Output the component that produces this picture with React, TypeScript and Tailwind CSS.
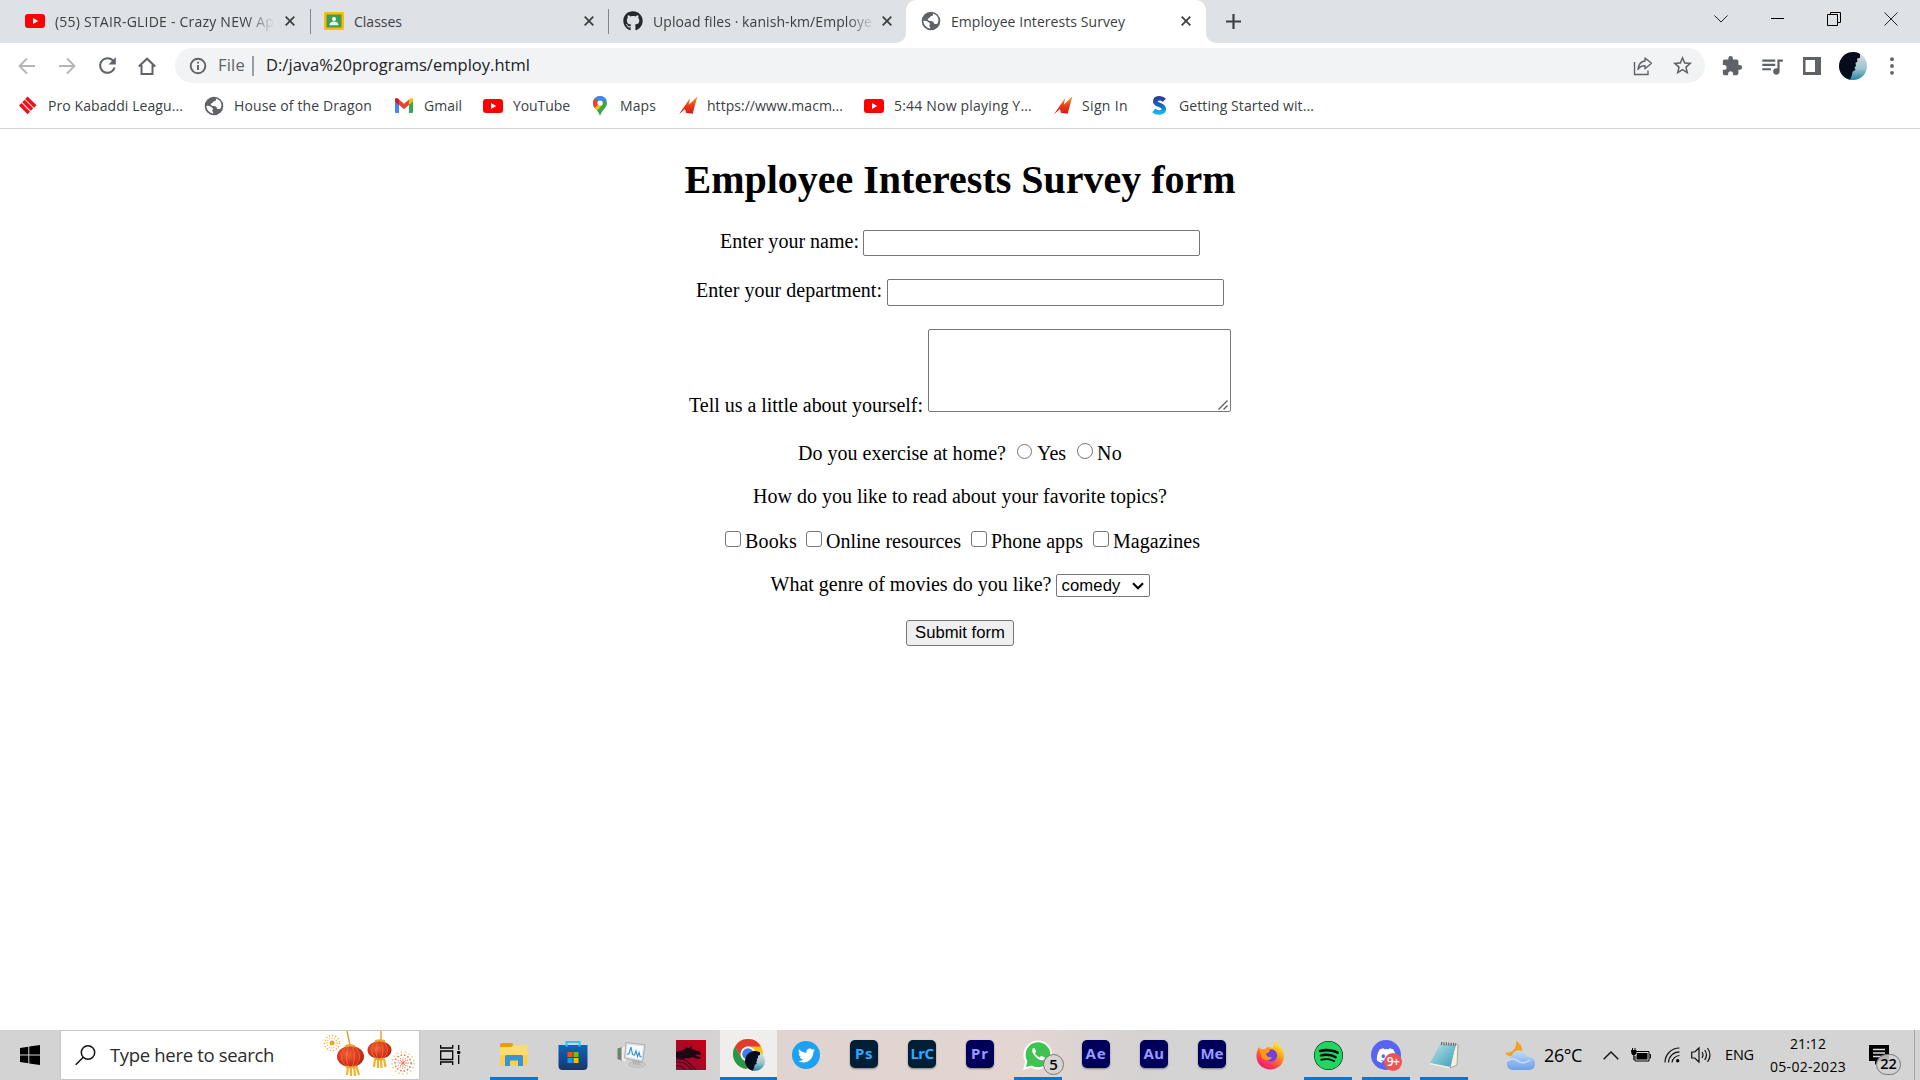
import { useLayoutEffect, useRef, useState } from "react";
import type { ReactNode } from "react";
import { FaGithub, FaTwitter, FaSpotify, FaDiscord } from "react-icons/fa";
import { MdExtension, MdQueueMusic, MdRefresh, MdStarBorder } from "react-icons/md";

/* Single-line label whose tracking is adjusted so that it fills a given width. */
function Fit({ w, className = "", children }: { w: number; className?: string; children: string }) {
  const ref = useRef<HTMLSpanElement>(null);
  const [spacing, setSpacing] = useState(0);
  useLayoutEffect(() => {
    if (ref.current) {
      const natural = ref.current.getBoundingClientRect().width;
      setSpacing((w - natural) / children.length);
    }
  }, []);
  return (
    <span ref={ref} className={"inline-block shrink-0 whitespace-nowrap " + className} style={{ letterSpacing: spacing + "px" }}>
      {children}
    </span>
  );
}

/* ---------- browser icons ---------- */

function YouTube() {
  return (
    <svg width="20" height="14" viewBox="0 0 20 14" className="block shrink-0">
      <rect width="20" height="14" rx="3" fill="#f00" />
      <path d="M8 4l5.2 3L8 10z" fill="#fff" />
    </svg>
  );
}

function Classroom() {
  return (
    <svg width="20" height="18" viewBox="0 0 20 18" className="block shrink-0">
      <rect width="20" height="18" rx="1.5" fill="#fbbc04" />
      <rect x="2.5" y="2.5" width="15" height="13" fill="#3f9d58" />
      <circle cx="10" cy="7" r="2" fill="#fff" />
      <path d="M5.500 13.200c0-2.800 2.400-3.800 4.500-3.800s4.500 1 4.500 3.800z" fill="#e8f5e9" />
    </svg>
  );
}

function Globe({ size }: { size: number }) {
  return (
    <svg width={size} height={size} viewBox="0 0 20 20" className="block shrink-0">
      <circle cx="10" cy="10" r="9.300" fill="#5f6368" />
      <path d="M11.500 2.400c1 1.200.6 2.300-.8 2.700-1.500.3-1.400 1.300-2.600 1.900-1.300.6-1.800 1.300-1 2.200 1.300 1.100 3.600.4 4.900 1.400 1.300 1.200.300 2.200 1.800 2.400 1.800.2 2.700-.4 3.200-1.500.900-2.300.500-5.200-1.700-7.200-1.100-1-2.500-1.700-3.800-1.900z" fill="#fff" />
      <path d="M2.400 9.800c1.800 0 3.900.500 5.200 1.400 1.200.9 1.900 1.500 1.100 2.500-.9.900-.4 1.600.3 2.400.5.600.3 1.300-.5 1.300-3.500-.8-6-3.800-6.100-7.600z" fill="#fff" />
    </svg>
  );
}

function CloseX() {
  return (
    <svg width="10" height="10" viewBox="0 0 10 10" className="block shrink-0">
      <path d="M0.700 0.700L9.300 9.300M9.300 0.700L0.700 9.300" stroke="#3c4043" strokeWidth="1.800" />
    </svg>
  );
}

function Kabaddi() {
  return (
    <svg width="18" height="19" viewBox="0 0 18 19" className="block shrink-0" stroke="#ee1119" strokeWidth="3.600">
      <path d="M7.300 1.800l9 8.700M4.500 5l8.500 8.500M1.300 8.200l8.500 8.800" />
    </svg>
  );
}

function Gmail() {
  return (
    <svg width="18" height="15" viewBox="0 0 20 15" preserveAspectRatio="none" className="block shrink-0">
      <path d="M0 2.500V13.700Q0 15 1.400 15H4.500V6z" fill="#4285f4" />
      <path d="M20 2.500V13.700Q20 15 18.600 15H15.500V6z" fill="#34a853" />
      <path d="M15.500 1.500V7L20 3.600V2C20 0 18 -0.500 16.500 .7z" fill="#fbbc04" />
      <path d="M4.500 7V1.500L10 5.700l5.500-4.200V7L10 11.200z" fill="#ea4335" />
      <path d="M0 2V3.600L4.500 7V1.500L3.500.7C2-.5 0 0 0 2z" fill="#c5221f" />
    </svg>
  );
}

function MapsPin() {
  return (
    <svg width="14" height="20" viewBox="0 0 14 20" className="block shrink-0">
      <path d="M7 0a7 7 0 0 1 7 7c0 5-5 6.500-7 13C5 13.500 0 12 0 7a7 7 0 0 1 7-7z" fill="#34a853" />
      <path d="M7 0a7 7 0 0 1 6.600 4.600L7 7 1.600 2.500A7 7 0 0 1 7 0z" fill="#4285f4" />
      <path d="M1.600 2.500L7 7 1.900 12C.8 10.700 0 9.200 0 7c0-1.700.6-3.300 1.600-4.500z" fill="#ea4335" />
      <path d="M1.900 12L9 4.500 10 8l-5.600 6.500z" fill="#fbbc04" />
      <circle cx="7" cy="7" r="2.600" fill="#fff" />
    </svg>
  );
}

function MacmillanM() {
  return (
    <svg width="19" height="19" viewBox="0 0 19 19" className="block shrink-0">
      <defs>
        <linearGradient id="flame" x1="0" y1="1" x2="0" y2="0">
          <stop offset="0" stopColor="#d01616" />
          <stop offset="0.5" stopColor="#ea3f1a" />
          <stop offset="1" stopColor="#f7a81c" />
        </linearGradient>
      </defs>
      <path d="M0.300 18L11 2.500 9.800 8.800 18.300 0.500 13.600 18l-3-1.500 2-5.500-5.500 6.500-1-4.500z" fill="url(#flame)" />
      <path d="M0.300 18L11 2.500 7 14.500 5.500 12zM7.500 17L18.300 0.500 12 17.500z" fill="url(#flame)" />
    </svg>
  );
}

function SLogo() {
  return (
    <svg width="15" height="19" viewBox="0 0 15 19" className="block shrink-0">
      <defs>
        <linearGradient id="sg" x1="0" y1="0" x2="0" y2="1">
          <stop offset="0" stopColor="#2b3f9e" />
          <stop offset="0.500" stopColor="#1464c0" />
          <stop offset="1" stopColor="#10b6ee" />
        </linearGradient>
      </defs>
      <path d="M12.300 4.400C9.500 1.400 3.300 1.600 3.300 5.400c0 4 8.500 3 8.500 7.700 0 4-7 4.400-10 1.400" fill="none" stroke="url(#sg)" strokeWidth="4.600" />
    </svg>
  );
}

function Avatar({ size }: { size: number }) {
  return (
    <svg width={size} height={size} viewBox="0 0 28 28" className="block shrink-0">
      <defs>
        <linearGradient id="sea" x1="0" y1="0" x2="0" y2="1">
          <stop offset="0.200" stopColor="#c9d8da" />
          <stop offset="0.600" stopColor="#9cc4cd" />
          <stop offset="1" stopColor="#1f86a3" />
        </linearGradient>
      </defs>
      <circle cx="14" cy="14" r="14" fill="url(#sea)" />
      <path d="M21 1.900A14 14 0 1 0 11 27.700l2-5 .5-3 3-2-1-2 1.500-2-.5-3 2-1-.5-3 3-1z" fill="#050d1c" />
    </svg>
  );
}

/* ---------- browser chrome ---------- */

function TabStrip() {
  return (
    <div className="flex h-[43px] w-full items-start bg-[#dee1e6]">
      <div className="flex h-[43px] w-[310px] items-center pb-[1px] pl-[25px]">
        <YouTube />
        <div className="ml-[10px] w-[220px] [mask-image:linear-gradient(to_right,black_190px,transparent_220px)]">
          <Fit w={219}>(55) STAIR-GLIDE - Crazy NEW Ap</Fit>
        </div>
        <div className="ml-[10px]"><CloseX /></div>
      </div>
      <div className="mt-[9px] h-[25px] w-px bg-[#80868b]" />
      <div className="flex h-[43px] w-[297px] items-center pb-[1px] pl-[13px]">
        <Classroom />
        <div className="ml-[10px] w-[219px]"><Fit w={48}>Classes</Fit></div>
        <div className="ml-[11px]"><CloseX /></div>
      </div>
      <div className="mt-[9px] h-[25px] w-px bg-[#80868b]" />
      <div className="flex h-[43px] w-[287px] items-center pb-[1px] pl-[14px]">
        <FaGithub size={20} color="#24292f" className="shrink-0" />
        <div className="ml-[10px] w-[220px] [mask-image:linear-gradient(to_right,black_194px,transparent_222px)]">
          <Fit w={219}>Upload files · kanish-km/Employe</Fit>
        </div>
        <div className="ml-[9px]"><CloseX /></div>
      </div>
      <div className="h-[43px] w-[10px] bg-white">
        <div className="h-[43px] w-[10px] rounded-br-[10px] bg-[#dee1e6]" />
      </div>
      <div className="flex h-[43px] w-[300px] items-start bg-[#dee1e6]">
        <div className="flex h-[43px] w-[300px] items-center rounded-t-[10px] bg-white pb-[1px] pl-[15px]">
          <Globe size={20} />
          <div className="ml-[10px] w-[220px]"><Fit w={174}>Employee Interests Survey</Fit></div>
          <div className="ml-[10px]"><CloseX /></div>
        </div>
      </div>
      <div className="h-[43px] w-[10px] bg-white">
        <div className="h-[43px] w-[10px] rounded-bl-[10px] bg-[#dee1e6]" />
      </div>
      <svg width="15" height="15" viewBox="0 0 15 15" className="ml-[10px] mt-[14px] block">
        <path d="M7.500 0v15M0 7.500h15" stroke="#3c4043" strokeWidth="2.200" />
      </svg>
      <div className="ml-auto mr-[22px] mt-[12px] flex items-center gap-[43px]">
        <svg width="14" height="14" viewBox="0 0 14 14" fill="none" stroke="#202124"><path d="M.5 3.500l6.500 6.500 6.500-6.500" /></svg>
        <svg width="13" height="14" viewBox="0 0 13 14"><rect y="6" width="13" height="1" fill="#000" /></svg>
        <svg width="14" height="14" viewBox="0 0 14 14" fill="none" stroke="#000"><path d="M.5 2.500h10v11h-10zM3.500 2.500v-2h10v10h-3" /></svg>
        <svg width="14" height="14" viewBox="0 0 14 14" fill="none" stroke="#202124"><path d="M.5.500l13 13M13.500.500l-13 13" /></svg>
      </div>
    </div>
  );
}

function Toolbar() {
  return (
    <div className="flex h-[45px] items-center text-[16.500px]">
      <svg width="18" height="18" viewBox="0 0 18 18" className="ml-[18px]" fill="none" stroke="#b3b5b8" strokeWidth="1.900"><path d="M17 9H2M9 1.500L1.500 9 9 16.500" /></svg>
      <svg width="18" height="18" viewBox="0 0 18 18" className="ml-[22px]" fill="none" stroke="#b3b5b8" strokeWidth="1.900"><path d="M1 9h15M9 1.500L16.500 9 9 16.500" /></svg>
      <MdRefresh size={25} color="#5f6368" className="ml-[19px]" />
      <svg width="18" height="18" viewBox="0 0 18 18" className="ml-[18px]" fill="none" stroke="#5f6368" strokeWidth="2"><path d="M3.500 8v9h11V8M.8 9.500L9 1.700l8.200 7.800" /></svg>
      <div className="ml-[19px] flex h-[35px] w-[1530px] items-center rounded-full bg-[#f1f3f4] pl-[14px]">
        <svg width="18" height="18" viewBox="0 0 18 18" fill="none" stroke="#5f6368" strokeWidth="1.900"><circle cx="9" cy="9" r="7.300" /><path d="M9 8v5M9 4.800v1.800" /></svg>
        <Fit w={27} className="ml-[11px] text-[#5f6368]">File</Fit>
        <div className="ml-[7px] h-5 w-[2px] bg-[#9aa0a6]" />
        <Fit w={264} className="ml-[12px] text-[#202124]">D:/java%20programs/employ.html</Fit>
        <svg width="20" height="20" viewBox="0 0 20 20" className="ml-auto" fill="none" stroke="#5f6368" strokeWidth="1.400">
          <path d="M1.500 6v12.500h13.500V14.500" />
          <path d="M12 2l6.500 5.300L12 12.700V9.700c-3.500 0-5.500 1-7 3.800C5.500 8.500 8 5.400 12 5z" strokeLinejoin="round" />
        </svg>
        <MdStarBorder size={23} color="#5f6368" className="ml-[18px] mr-[11px]" />
      </div>
      <MdExtension size={22} color="#5f6368" className="ml-[16px]" />
      <MdQueueMusic size={26} color="#5f6368" className="ml-[16px]" />
      <svg width="18" height="18" viewBox="0 0 18 18" className="ml-[18px]"><path fillRule="evenodd" fill="#5f6368" d="M0 0h18v18H0zM2.500 3v12H12V3z" /></svg>
      <div className="ml-[18px]"><Avatar size={28} /></div>
      <svg width="4" height="18" viewBox="0 0 4 18" className="ml-[23px]" fill="#5f6368"><circle cx="2" cy="2.200" r="1.900" /><circle cx="2" cy="9" r="1.900" /><circle cx="2" cy="15.800" r="1.900" /></svg>
    </div>
  );
}

function Bookmark({ slot, gap, w, icon, children }: { slot: string; gap: string; w: number; icon: ReactNode; children: string }) {
  return (
    <div className={"flex shrink-0 items-center " + slot}>
      {icon}
      <div className={gap}><Fit w={w}>{children}</Fit></div>
    </div>
  );
}

function Bookmarks() {
  return (
    <div className="flex h-[41px] items-center border-b border-[#d4d6d9] pb-[5px] pl-[19px]">
      <Bookmark slot="w-[185px]" gap="ml-[11px]" w={135} icon={<Kabaddi />}>Pro Kabaddi Leagu...</Bookmark>
      <Bookmark slot="w-[191px]" gap="ml-[10px]" w={138} icon={<Globe size={20} />}>House of the Dragon</Bookmark>
      <Bookmark slot="w-[88px]" gap="ml-[11px]" w={38} icon={<Gmail />}>Gmail</Bookmark>
      <Bookmark slot="w-[110px]" gap="ml-[10px]" w={57} icon={<YouTube />}>YouTube</Bookmark>
      <Bookmark slot="w-[86px]" gap="ml-[13px]" w={36} icon={<MapsPin />}>Maps</Bookmark>
      <Bookmark slot="w-[185px]" gap="ml-[9px]" w={136} icon={<MacmillanM />}>https://www.macm...</Bookmark>
      <Bookmark slot="w-[190px]" gap="ml-[10px]" w={138} icon={<YouTube />}>5:44 Now playing Y...</Bookmark>
      <Bookmark slot="w-[98px]" gap="ml-[9px]" w={46} icon={<MacmillanM />}>Sign In</Bookmark>
      <Bookmark slot="w-[170px]" gap="ml-[12px]" w={135} icon={<SLogo />}>Getting Started wit...</Bookmark>
    </div>
  );
}

/* ---------- survey form ---------- */

const box = "block shrink-0 appearance-none border border-[#767676] bg-white ";

function Check({ label, gap, w }: { label: string; gap: string; w: number }) {
  return (
    <label className={"flex " + gap}>
      <input type="checkbox" className={box + "mt-[1px] size-4 rounded-[3px]"} />
      <Fit w={w} className="ml-1">{label}</Fit>
    </label>
  );
}

function Survey() {
  return (
    <main className="flex h-[901px] flex-col items-center bg-white pt-[28px] font-['Liberation_Serif',serif] text-[20px] leading-[23px] text-black">
      <h1 className="h-[72px] text-[40px] font-bold leading-[46px]"><Fit w={551}>Employee Interests Survey form</Fit></h1>
      <div className="flex h-[49px]">
        <Fit w={139} className="mt-[1px]">Enter your name:</Fit>
        <input className={box + "ml-[4px] mt-[1px] h-[26px] w-[337px] rounded-[2px]"} />
      </div>
      <div className="flex h-[51px]">
        <Fit w={186} className="mt-[1px]">Enter your department:</Fit>
        <input className={box + "ml-[5px] mt-[1px] h-[27px] w-[337px] rounded-[2px]"} />
      </div>
      <div className="flex h-[113px]">
        <Fit w={234} className="mt-[65px]">Tell us a little about yourself:</Fit>
        <div className="relative ml-[5px] h-[83px] w-[303px]">
          <textarea className={box + "h-[83px] w-[303px] resize-none rounded-[2px]"} />
          <svg width="10" height="10" viewBox="0 0 10 10" className="absolute bottom-[2px] right-[3px]" fill="none" stroke="#5a5a5a" strokeWidth="1.300"><path d="M.5 9.500l9-9M5.500 9.500l4-4" /></svg>
        </div>
      </div>
      <div className="flex h-[43px]">
        <Fit w={208}>Do you exercise at home?</Fit>
        <label className="flex"><input type="radio" name="exercise" className={box + "ml-[11px] mt-[2px] size-[15px] rounded-full"} /><Fit w={29} className="ml-[5px]">Yes</Fit></label>
        <label className="flex"><input type="radio" name="exercise" className={box + "ml-[11px] mt-[1px] size-4 rounded-full"} /><Fit w={25} className="ml-1">No</Fit></label>
      </div>
      <div className="h-[45px]"><Fit w={414}>How do you like to read about your favorite topics?</Fit></div>
      <div className="flex h-[43px] pl-[5px]">
        <Check label="Books" gap="" w={52} />
        <Check label="Online resources" gap="ml-[9px]" w={135} />
        <Check label="Phone apps" gap="ml-[10px]" w={92} />
        <Check label="Magazines" gap="ml-[10px]" w={87} />
      </div>
      <div className="flex h-[47px]">
        <Fit w={281}>What genre of movies do you like?</Fit>
        <button type="button" className="ml-1 mt-[1px] flex h-[23px] w-[94px] items-center rounded-[2px] border border-[#767676] bg-white pl-[5px] font-['Liberation_Sans',sans-serif] text-[16.670px] leading-[20px]">
          <Fit w={59}>comedy</Fit>
          <svg width="12" height="8" viewBox="0 0 12 8" className="ml-[11px]" fill="none" stroke="#000" strokeWidth="2.200"><path d="M1 1.200l5 5 5-5" /></svg>
        </button>
      </div>
      <button type="button" className="flex h-[26px] w-[108px] items-center justify-center rounded-[3px] border border-[#767676] bg-[#efefef] font-['Liberation_Sans',sans-serif] text-[16.670px] leading-[20px]">
        <Fit w={90}>Submit form</Fit>
      </button>
    </main>
  );
}

/* ---------- taskbar ---------- */

function Lanterns() {
  return (
    <svg width="94" height="46" viewBox="0 0 94 46" className="block">
      <defs>
        <radialGradient id="lan" cx="0.4" cy="0.4" r="0.7">
          <stop offset="0" stopColor="#f0643a" />
          <stop offset="0.6" stopColor="#d8321c" />
          <stop offset="1" stopColor="#a81e12" />
        </radialGradient>
      </defs>
      <g strokeWidth="1.500" fill="none">
        <circle cx="9" cy="12" r="7.500" stroke="#f3b04a" strokeDasharray="1.200 2" />
        <circle cx="9" cy="12" r="5" stroke="#f5bd50" strokeDasharray="1 1.500" />
        <circle cx="9" cy="12" r="2.500" fill="#f0a030" />
        <circle cx="80" cy="32" r="11" stroke="#f5c560" strokeDasharray="1.300 2.800" />
        <circle cx="80" cy="32" r="8" stroke="#ef6a50" strokeDasharray="1.500 2" />
        <circle cx="80" cy="32" r="5" stroke="#f3a05a" strokeDasharray="1 1.500" />
        <path d="M76 32h8M80 28v8M77 29l6 6M83 29l-6 6" stroke="#ee6d55" strokeWidth=".8" />
      </g>
      <path d="M24 0l3 14M58 0v10" stroke="#e2a233" strokeWidth="1.500" />
      <path d="M25 34l-1 10M28 34v11M31 34l1 11M33 34l3 10M52 28l-1 8M55 28v9M58 28l.5 9M61 28l1.500 8" stroke="#eeb52c" strokeWidth="2.200" />
      <ellipse cx="27.500" cy="25.500" rx="13.500" ry="10.500" fill="url(#lan)" />
      <ellipse cx="56.500" cy="19" rx="12" ry="9" fill="url(#lan)" />
      <g fill="none" stroke="#e88238" strokeWidth=".7">
        <ellipse cx="27.500" cy="25.500" rx="4" ry="10.500" /><ellipse cx="27.500" cy="25.500" rx="9" ry="10.500" />
        <ellipse cx="56.500" cy="19" rx="3.500" ry="9" /><ellipse cx="56.500" cy="19" rx="8" ry="9" />
      </g>
      <path d="M22 15.500q5-3 10 0M23 35.500q5 2 10 0M52 10.500q5-2.500 10 0M52 27.500q5 2 9 0" stroke="#e9a62c" strokeWidth="2.200" fill="none" />
    </svg>
  );
}

function Adobe({ label, dark }: { label: string; dark?: boolean }) {
  return (
    <div className={"mb-[3px] flex size-7 items-center justify-center rounded-[5px] font-['Noto_Sans',sans-serif] text-[15px] font-bold leading-none shadow-[0_1px_2px_rgba(0,0,0,0.4)] " + (dark ? "bg-[#001e36] text-[#31a8ff]" : "bg-[#00005b] text-[#9999ff]")}>
      <Fit w={label === "LrC" || label === "Me" ? 23 : label === "Pr" || label === "Ps" ? 18 : 21} className="pb-[1px]">{label}</Fit>
    </div>
  );
}

function Explorer() {
  return (
    <svg width="28" height="28" viewBox="0 0 28 28">
      <path d="M0 3.500Q0 2 1.500 2H11l2 2.500h13.500q1 0 1 1V23q0 1.500-1.500 1.500H1.500Q0 24.500 0 23z" fill="#ffcf48" />
      <path d="M0 6V3.500Q0 2 1.500 2H12.500L13 4.500 11 6z" fill="#e3a008" />
      <path d="M0 6.500h11l2-2h13.500q1 0 1 1V14H0z" fill="#ffdc70" />
      <path d="M5 24.500V15.500Q5 14 6.500 14h15q1.500 0 1.500 1.500V25h-5v-5.500h-8V25H5z" fill="#3a94d8" />
    </svg>
  );
}

function Store() {
  return (
    <svg width="30" height="30" viewBox="0 0 30 30">
      <defs><linearGradient id="st" x1="0" y1="0" x2="0" y2="1"><stop offset="0" stopColor="#0b67b8" /><stop offset="1" stopColor="#1a3565" /></linearGradient></defs>
      <path d="M.500 5h29v21q0 4-4 4h-21q-4 0-4-4z" fill="url(#st)" />
      <path d="M8.500 6.500V2h13v4.500" fill="none" stroke="#35c3f3" strokeWidth="2.200" />
      <path d="M9.500 12h5v5h-5z" fill="#f25022" /><path d="M15.500 12h5v5h-5z" fill="#7fba00" />
      <path d="M9.500 18h5v5h-5z" fill="#00a4ef" /><path d="M15.500 18h5v5h-5z" fill="#ffb900" />
    </svg>
  );
}

function Monitor() {
  return (
    <svg width="29" height="28" viewBox="0 0 29 28">
      <path d="M0.500 7.500l5-1.500v14l-5-2z" fill="#77797b" /><path d="M.8 9h2v2.500h-2z" fill="#25c03a" />
      <path d="M4.500 6.500l4.500-1v15l-4.500-1z" fill="#ececec" />
      <ellipse cx="20" cy="23.500" rx="8.500" ry="3" fill="#c9c9c9" stroke="#aaa" strokeWidth=".5" />
      <path d="M15 19l8 1 1 4-8-.5z" fill="#b5b5b5" />
      <path d="M9 1.500L28 3.800l-2.500 17L7.500 17z" fill="#e3e3e3" stroke="#a0a0a0" strokeWidth=".8" />
      <path d="M10.500 3.700L26 5.500l-2 13-14.500-3z" fill="#f5fbff" />
      <path d="M10 13.500l2-1 2-6.500 1.500 7.500 2 .5 1.500-4 1.500 5.500 1.500-4 1 4 1.500.5" fill="none" stroke="#3f92cc" strokeWidth="1.200" />
    </svg>
  );
}

function DragonTile() {
  return (
    <svg width="30" height="30" viewBox="0 0 30 30">
      <defs><linearGradient id="dr" x1="0" y1="1" x2="1" y2="0"><stop offset="0" stopColor="#8f0c32" /><stop offset="0.600" stopColor="#b10620" /><stop offset="1" stopColor="#c80014" /></linearGradient></defs>
      <path d="M0 0h30v30H0z" fill="url(#dr)" />
      <path d="M0 12l6-1.500 4-2-2-1 5 .5 3-2.500-.5 3 4 2 4 1 1.500 2-.5 1.500-4-.5-1.500.5 3 1.500 3 .5-1.500 2-4-.5-3.500-1.500-3 1.500-3-.500-3.500 2L0 18z" fill="#1e0712" />
      <path d="M0 19q8-1 13 4t7 7M0 22q7-.5 11 3t5 5M0 26q6-1 9 4" stroke="#52071f" strokeWidth="1.100" fill="none" />
    </svg>
  );
}

function ChromeIcon() {
  return (
    <div className="relative size-8">
      <svg width="30" height="30" viewBox="0 0 30 30" className="block">
        <circle cx="15" cy="15" r="15" fill="#fbc116" />
        <path d="M2 7.500A15 15 0 0 1 28 7.500H15a7.500 7.500 0 0 0-6.500 11z" fill="#e33b2e" />
        <path d="M2 7.500L8.500 18.750a7.500 7.500 0 0 0 6.500 3.750h2L13.500 30A15 15 0 0 1 2 7.500z" fill="#279847" />
        <circle cx="15" cy="15" r="7.500" fill="#fff" />
        <circle cx="15" cy="15" r="5.800" fill="#3a7ff0" />
      </svg>
      <div className="absolute bottom-0 right-0"><Avatar size={20} /></div>
    </div>
  );
}

function WhatsApp() {
  return (
    <div className="relative size-[30px]">
      <svg width="30" height="30" viewBox="0 0 30 30" className="block">
        <path d="M0 30l2.200-8A14.500 14.500 0 1 1 8 27.800z" fill="#fff" />
        <circle cx="15" cy="14.700" r="12.400" fill="#3ec350" />
        <path d="M3 27l1.500-6 4.500 4.500z" fill="#3ec350" />
        <path d="M10.500 8c-2 1.300-1.800 4 1 7.500s6.500 5.800 9 4.500c1.700-1 1.500-2.300 1-2.700l-3-1.500c-.6-.3-1.200 1.500-2 1.500-1.200 0-4.500-3-4.500-4.200 0-.7 1.200-1.200 1-1.900l-1.200-2.700c-.2-.6-.8-.7-1.300-.5z" fill="#fff" />
      </svg>
      <div className="absolute left-5 top-[14px] flex size-[21px] items-center justify-center rounded-full border border-[#777] bg-[#d6d3d1] text-[15px] font-semibold leading-none text-black">5</div>
    </div>
  );
}

function Firefox() {
  return (
    <svg width="29" height="29" viewBox="0 0 29 29">
      <defs>
        <linearGradient id="ff" x1="0.800" y1="0" x2="0.200" y2="1"><stop offset="0.100" stopColor="#ffe02e" /><stop offset="0.450" stopColor="#ff8a16" /><stop offset="0.750" stopColor="#ff3750" /><stop offset="1" stopColor="#e31587" /></linearGradient>
      </defs>
      <path d="M19 0c2 2.500 5 5 7 8 5 9 0 20.500-11.500 20.500C5 28.500 0 21 .5 14 .8 10 2 8 3 6l2 3 4-1c2-3 6-2 8-1 0-3 .5-5 2-7z" fill="url(#ff)" />
      <circle cx="15" cy="14.500" r="6.200" fill="#7340d8" />
      <path d="M3 7l5 2c3-2 5-1 6 0-1 3-3 3-4 3.500 0 3 3 4.500 6 3.500-2 5-9 4-11-1z" fill="#ff9716" />
    </svg>
  );
}

function Discord() {
  return (
    <div className="relative flex size-[30px] items-center justify-center rounded-full bg-[#5865f2]">
      <FaDiscord size={21} color="#fff" />
      <div className="absolute -bottom-px -right-px flex size-[18px] items-center justify-center rounded-full bg-[#ed5555] text-[12px] font-semibold leading-none tracking-[-0.500px] text-white">9+</div>
    </div>
  );
}

function Notepad() {
  return (
    <svg width="29" height="28" viewBox="0 0 29 28">
      <defs><linearGradient id="np" x1="0" y1="0" x2="1" y2="1"><stop offset="0" stopColor="#b7e3ee" /><stop offset="1" stopColor="#3e9db4" /></linearGradient></defs>
      <path d="M25 3l3 1-1 20-7 3z" fill="#f5f2e2" stroke="#8a8a7a" strokeWidth=".7" />
      <path d="M10 3l16 1-6 22L0 22z" fill="url(#np)" />
      <path d="M0 22l20 4-.500 1.500L0 23.500z" fill="#eee" />
      <path d="M11 2.500l15 1" stroke="#666" strokeWidth="3" strokeDasharray="1.200 1.200" />
    </svg>
  );
}

function Cell({ open, active, wide, children }: { open?: boolean; active?: boolean; wide?: boolean; children: ReactNode }) {
  return (
    <div className={"flex h-[50px] shrink-0 flex-col items-center " + (active ? "w-[57px] bg-[#f0eeed]" : wide ? "w-[59px]" : "w-[58px]")}>
      <div className="flex h-[47px] items-center pt-[3px]">{children}</div>
      <div className={"h-[3px] " + (open ? (active ? "w-[57px] bg-[#0078d7]" : "w-12 bg-[#0078d7]") : "w-12")} />
    </div>
  );
}

function Weather() {
  return (
    <svg width="30" height="29" viewBox="0 0 30 29" className="shrink-0">
      <defs><linearGradient id="cl" x1="0" y1="0" x2="0" y2="1"><stop offset="0" stopColor="#c5dbfa" /><stop offset="1" stopColor="#6d9fe8" /></linearGradient></defs>
      <path d="M11 0c8 4 8 13 0 15-5 1.500-9 0-11-3 7 0 12-4 11-12z" fill="#f5a021" />
      <path d="M7 29a6.500 6.500 0 0 1-.8-12.500C7 12 10 9.500 13.500 9.500c4 0 6.500 2.500 7.500 6 5 0 9 2 9 7S27 29 23 29z" fill="url(#cl)" />
      <path d="M2 20q6-4 11 0t12-1" stroke="#dfeafd" strokeWidth="1.500" fill="none" opacity=".7" />
    </svg>
  );
}

function Taskbar() {
  return (
    <div className="flex h-[50px] w-full items-center bg-[linear-gradient(to_right,#d3d3d3_0px,#d3d3d3_700px,#e0d4d1_800px,#e2d5d2_1030px,#d5d3d2_1140px,#d4d4d4_1200px)] text-black">
      <div className="flex h-[50px] w-[60px] items-center justify-center">
        <svg width="20" height="20" viewBox="0 0 20 20"><path d="M0 3l8.300-1.200v7.700H0zM9.300 1.600L20 0v9.500H9.300zM0 10.500h8.300v7.700L0 17zM9.300 10.500H20V20L9.300 18.400z" /></svg>
      </div>
      <div className="flex h-[50px] w-[360px] items-center border border-[#c6c6c6] bg-white pl-[14px]">
        <svg width="21" height="21" viewBox="0 0 21 21" fill="none" stroke="#111" strokeWidth="1.500"><circle cx="13" cy="7.500" r="6.700" /><path d="M8.200 12.300L.7 19.800" /></svg>
        <Fit w={164} className="ml-[14px] text-[18.500px] text-[#2b2b2b]">Type here to search</Fit>
        <div className="ml-[49px] flex h-12 items-start"><Lanterns /></div>
      </div>
      <div className="flex w-[64px] pl-[20px]">
        <svg width="21" height="20" viewBox="0 0 21 20" fill="none" stroke="#000" strokeWidth="1.300"><path d="M.7 0v3h12V0M.7 6h12v8.500H.7zM.7 20v-3h12v3M18.700 0v5M18.700 10v9" /><path d="M17.200 6h3v3h-3z" fill="#000" stroke="none" /></svg>
      </div>
      <Cell wide open><Explorer /></Cell>
      <Cell wide><Store /></Cell>
      <Cell wide><Monitor /></Cell>
      <Cell wide><DragonTile /></Cell>
      <Cell open active><ChromeIcon /></Cell>
      <Cell><div className="flex size-7 items-center justify-center rounded-full bg-[#1da1f2]"><FaTwitter size={17} color="#fff" /></div></Cell>
      <Cell><Adobe label="Ps" dark /></Cell>
      <Cell><Adobe label="LrC" dark /></Cell>
      <Cell><Adobe label="Pr" /></Cell>
      <Cell open><WhatsApp /></Cell>
      <Cell><Adobe label="Ae" /></Cell>
      <Cell><Adobe label="Au" /></Cell>
      <Cell><Adobe label="Me" /></Cell>
      <Cell><Firefox /></Cell>
      <Cell open><div className="rounded-full bg-black"><FaSpotify size={29} color="#1ed760" /></div></Cell>
      <Cell open><Discord /></Cell>
      <Cell open><Notepad /></Cell>
      <div className="flex h-[50px] w-[447px] items-center pl-[32px]">
        <Weather />
        <Fit w={38} className="ml-[9px] text-[18px]">26°C</Fit>
        <svg width="16" height="9" viewBox="0 0 16 9" className="ml-[21px]" fill="none" stroke="#111" strokeWidth="1.400"><path d="M.7 8.300L8 1l7.300 7.300" /></svg>
        <svg width="20" height="15" viewBox="0 0 20 15" className="ml-[12px]"><path d="M4.500 3.500h13.500v9.500h-14V8M18.500 6.500h1v3.500h-1" fill="none" stroke="#000" /><path d="M6 5h10.500v6.500H5.500V8z" /><path d="M0 2h5.500v3q-.5 2-2.200 2.200V12h-1V7.200Q.5 7 .3 5zM1 0h1v2H1zM3.500 0h1v2h-1z" /></svg>
        <svg width="16" height="16" viewBox="0 0 16 16" className="ml-[13px]" fill="none" stroke="#111" strokeWidth="1.200"><path d="M1 15.500A14.500 14.500 0 0 1 15.500 1M4.500 15.500A11 11 0 0 1 15.500 4.800M8 15.500A8 8 0 0 1 15.500 8.500" /><circle cx="13.700" cy="13.700" r="1.700" fill="#000" stroke="none" /></svg>
        <svg width="21" height="18" viewBox="0 0 21 18" className="ml-[11px]" fill="none" stroke="#111" strokeWidth="1.200"><path d="M.7 6h3L8 2v14l-4.300-4h-3zM11 6q2 3 0 6M13.700 4q3.500 5 0 10M16.500 2q5 7 0 14" /></svg>
        <Fit w={29} className="ml-[13px] text-[14.500px]">ENG</Fit>
        <div className="ml-[15px] flex w-[78px] flex-col items-center gap-[1px] text-[14px] leading-[22px]">
          <Fit w={36}>21:12</Fit>
          <Fit w={76}>05-02-2023</Fit>
        </div>
        <div className="relative ml-[22px] h-[20px] w-[20px]">
          <svg width="20" height="20" viewBox="0 0 20 20" className="block"><path d="M0 0h20v16H9.500L6 20v-4H0z" /><path d="M4 4.500h12M4 8h12M4 11.500h8" stroke="#ddd" strokeWidth="1.300" /></svg>
          <div className="absolute left-[7px] top-[9px] flex h-[21px] w-[25px] items-center justify-center rounded-full border border-[#777] bg-[#d0d0d0]/85 text-[14.500px] font-semibold leading-none">22</div>
        </div>
        <div className="ml-auto mr-[5px] h-[50px] w-px bg-[#a5a5a5]" />
      </div>
    </div>
  );
}

export default function App() {
  return (
    <div className="flex h-[1080px] w-[1920px] flex-col overflow-hidden bg-white font-['Open_Sans',sans-serif] text-[14px] text-[#3c4043]">
      <TabStrip />
      <Toolbar />
      <Bookmarks />
      <Survey />
      <Taskbar />
    </div>
  );
}
